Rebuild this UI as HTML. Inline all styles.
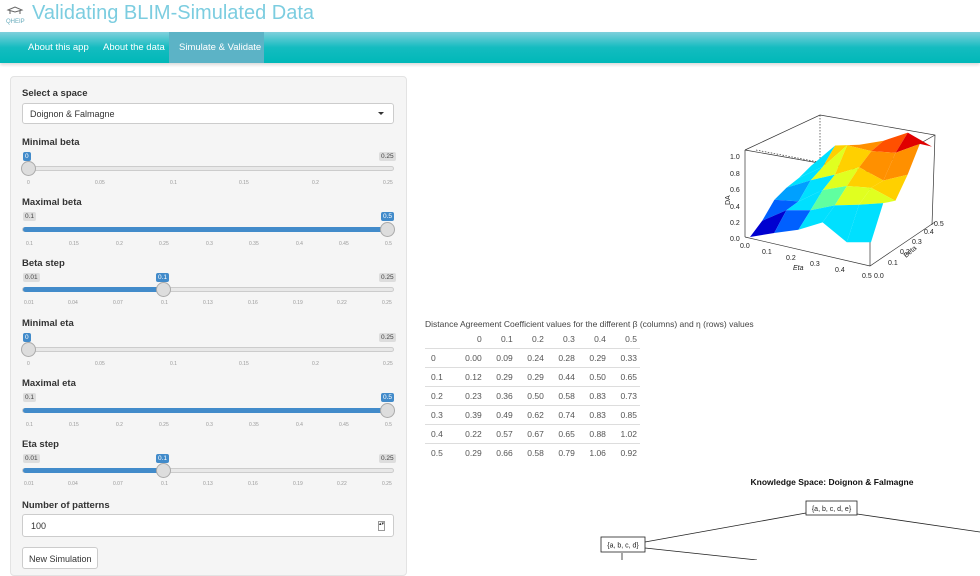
<!DOCTYPE html>
<html><head><meta charset="utf-8"><style>
*{box-sizing:border-box;margin:0;padding:0}
body{width:980px;height:560px;overflow:hidden;background:#fff;font-family:"Liberation Sans",sans-serif;color:#333;position:relative}
.a{position:absolute}
.title{left:32px;top:2px;font-size:20px;color:#7ccde0;white-space:nowrap}
.nav{left:0;top:32px;width:980px;height:31px;background:linear-gradient(#7fd0dc,#14bcc0 50%,#00b8b8);box-shadow:0 2px 3px rgba(0,0,0,.15)}
.nav span{position:absolute;top:10px;font-size:9.5px;color:#fff;white-space:nowrap}
.panel{left:10px;top:76px;width:397px;height:500px;background:#f5f5f5;border:1px solid #e3e3e3;border-radius:4px}
.lbl{font-size:9.5px;font-weight:bold;color:#333;left:22px;white-space:nowrap}
.sel{left:22px;top:103px;width:372px;height:21px;background:#fff;border:1px solid #ccc;border-radius:3px;font-size:9px;padding:5px 7px}
.bub{font-size:6.5px;padding:1px 2px;border-radius:2px;background:#ddd;color:#444;line-height:7px}
.bub.b{background:#428bca;color:#fff}
.trk{left:22px;width:372px;height:5px;background:#e8e8e8;border:1px solid #ccc;border-radius:3px}
.fill{height:5px;margin-top:-1px;background:#428bca;border-radius:3px}
.hdl{width:15px;height:15px;border-radius:50%;background:#ddd;border:1px solid #aaa}
.tl{font-size:5px;color:#999;white-space:nowrap}
.inp{left:22px;top:514px;width:372px;height:23px;background:#fff;border:1px solid #ccc;border-radius:3px;font-size:9px;padding:6px 8px}
.btn{left:22px;top:547px;width:76px;height:22px;background:#fff;border:1px solid #ccc;border-radius:3px;font-size:9px;padding:6px 6px;white-space:nowrap}
table{border-collapse:collapse;font-size:8.5px;color:#555}
td{height:19px;text-align:right;padding:0 3px;border-top:1px solid #ddd}
tr.h td{border-top:none;height:18px}
td.r{text-align:left;padding-left:6px}
</style></head><body>
<svg class="a" style="left:4px;top:4px" width="22" height="22" viewBox="0 0 22 22"><path d="M4 6 L11 3 L18 6 L11 8Z M6 7 V10 M16 7 V10" stroke="#666" fill="none" stroke-width="1"/><text x="2" y="19" font-size="6" fill="#6ab" font-family="Liberation Sans">QHEIP</text></svg>
<div class="a title">Validating BLIM-Simulated Data</div>
<div class="a nav"><span style="left:28px">About this app</span><span style="left:103px">About the data</span><div class="a" style="left:169px;top:0;width:95px;height:31px;background:#5cb3c6"></div><span style="left:179px">Simulate &amp; Validate</span></div>
<div class="a panel"></div>
<div class="a lbl" style="top:88px">Select a space</div>
<div class="a sel">Doignon &amp; Falmagne<span style="position:absolute;right:9px;top:8px;border:3px solid transparent;border-top:3px solid #333"></span></div>

<div class="a lbl" style="top:137px">Minimal beta</div>
<div class="a bub b" style="left:23px;top:152px">0</div><div class="a bub" style="left:379px;top:152px">0.25</div>
<div class="a trk" style="top:166px"></div>
<div class="a hdl" style="left:21px;top:161px"></div>
<div class="a tl" style="left:27px;top:180px;width:370px"><span class="a" style="left:0">0</span><span class="a" style="left:68px">0.05</span><span class="a" style="left:143px">0.1</span><span class="a" style="left:212px">0.15</span><span class="a" style="left:285px">0.2</span><span class="a" style="left:356px">0.25</span></div>

<div class="a lbl" style="top:197px">Maximal beta</div>
<div class="a bub" style="left:23px;top:212px">0.1</div><div class="a bub b" style="left:381px;top:212px">0.5</div>
<div class="a trk" style="top:227px"><div class="fill" style="width:100%"></div></div>
<div class="a hdl" style="left:380px;top:222px"></div>
<div class="a tl" style="left:26px;top:241px;width:370px"><span class="a" style="left:0">0.1</span><span class="a" style="left:43px">0.15</span><span class="a" style="left:90px">0.2</span><span class="a" style="left:133px">0.25</span><span class="a" style="left:180px">0.3</span><span class="a" style="left:223px">0.35</span><span class="a" style="left:270px">0.4</span><span class="a" style="left:313px">0.45</span><span class="a" style="left:359px">0.5</span></div>

<div class="a lbl" style="top:258px">Beta step</div>
<div class="a bub" style="left:23px;top:273px">0.01</div><div class="a bub b" style="left:156px;top:273px">0.1</div><div class="a bub" style="left:379px;top:273px">0.25</div>
<div class="a trk" style="top:287px"><div class="fill" style="width:38%"></div></div>
<div class="a hdl" style="left:156px;top:282px"></div>
<div class="a tl" style="left:24px;top:300px;width:370px"><span class="a" style="left:0">0.01</span><span class="a" style="left:44px">0.04</span><span class="a" style="left:89px">0.07</span><span class="a" style="left:137px">0.1</span><span class="a" style="left:179px">0.13</span><span class="a" style="left:224px">0.16</span><span class="a" style="left:269px">0.19</span><span class="a" style="left:313px">0.22</span><span class="a" style="left:358px">0.25</span></div>

<div class="a lbl" style="top:318px">Minimal eta</div>
<div class="a bub b" style="left:23px;top:333px">0</div><div class="a bub" style="left:379px;top:333px">0.25</div>
<div class="a trk" style="top:347px"></div>
<div class="a hdl" style="left:21px;top:342px"></div>
<div class="a tl" style="left:27px;top:361px;width:370px"><span class="a" style="left:0">0</span><span class="a" style="left:68px">0.05</span><span class="a" style="left:143px">0.1</span><span class="a" style="left:212px">0.15</span><span class="a" style="left:285px">0.2</span><span class="a" style="left:356px">0.25</span></div>

<div class="a lbl" style="top:378px">Maximal eta</div>
<div class="a bub" style="left:23px;top:393px">0.1</div><div class="a bub b" style="left:381px;top:393px">0.5</div>
<div class="a trk" style="top:408px"><div class="fill" style="width:100%"></div></div>
<div class="a hdl" style="left:380px;top:403px"></div>
<div class="a tl" style="left:26px;top:422px;width:370px"><span class="a" style="left:0">0.1</span><span class="a" style="left:43px">0.15</span><span class="a" style="left:90px">0.2</span><span class="a" style="left:133px">0.25</span><span class="a" style="left:180px">0.3</span><span class="a" style="left:223px">0.35</span><span class="a" style="left:270px">0.4</span><span class="a" style="left:313px">0.45</span><span class="a" style="left:359px">0.5</span></div>

<div class="a lbl" style="top:439px">Eta step</div>
<div class="a bub" style="left:23px;top:454px">0.01</div><div class="a bub b" style="left:156px;top:454px">0.1</div><div class="a bub" style="left:379px;top:454px">0.25</div>
<div class="a trk" style="top:468px"><div class="fill" style="width:38%"></div></div>
<div class="a hdl" style="left:156px;top:463px"></div>
<div class="a tl" style="left:24px;top:481px;width:370px"><span class="a" style="left:0">0.01</span><span class="a" style="left:44px">0.04</span><span class="a" style="left:89px">0.07</span><span class="a" style="left:137px">0.1</span><span class="a" style="left:179px">0.13</span><span class="a" style="left:224px">0.16</span><span class="a" style="left:269px">0.19</span><span class="a" style="left:313px">0.22</span><span class="a" style="left:358px">0.25</span></div>

<div class="a lbl" style="top:500px">Number of patterns</div>
<div class="a inp">100<span style="position:absolute;right:8px;top:6px;width:7px;height:10px;border:1px solid #999;font-size:5px;line-height:4px;text-align:center">▴▾</span></div>
<div class="a btn">New Simulation</div>

<svg class="a" style="left:690px;top:100px" width="290" height="190" viewBox="690 100 290 190" font-family="Liberation Sans" font-size="7">
<g stroke="#333" stroke-width="0.7" fill="none">
<path d="M745 150 L820 115 L935 135 L932 225 M745 150 L745 237 M745 150 L870 172 L935 135 M870 172 L870 266"/>
<path d="M745 237 L870 266 L935 222" />
<path d="M820 115 L820 200" stroke-dasharray="1.5 1.5"/>
<path d="M756 150 L870 172" stroke-dasharray="1.5 1.5"/>
</g>
<g stroke="none">
<polygon points="811,165.9 835.2,145.5 823,166.6 798.8,178" fill="#00e0ff"/>
<polygon points="798.8,178 823,166.6 810.8,180.3 786.6,187.6" fill="#00e0ff"/>
<polygon points="786.6,187.6 810.8,180.3 798.6,201.4 774.4,199.7" fill="#00a0ff"/>
<polygon points="774.4,199.7 798.6,201.4 786.4,210.2 762.2,220.8" fill="#0060ff"/>
<polygon points="762.2,220.8 786.4,210.2 774.2,233 750,237" fill="#0000d0"/>
<polygon points="835.2,145.5 859.4,144.7 847.2,145.3 823,166.6" fill="#ffd000"/>
<polygon points="823,166.6 847.2,145.3 835,174.6 810.8,180.3" fill="#e0ff20"/>
<polygon points="810.8,180.3 835,174.6 822.8,190 798.6,201.4" fill="#00e0ff"/>
<polygon points="798.6,201.4 822.8,190 810.6,210.3 786.4,210.2" fill="#00e0ff"/>
<polygon points="786.4,210.2 810.6,210.3 798.4,229.7 774.2,233" fill="#0060ff"/>
<polygon points="859.4,144.7 883.6,140.7 871.4,151.1 847.2,145.3" fill="#ff9000"/>
<polygon points="847.2,145.3 871.4,151.1 859.2,167.3 835,174.6" fill="#ffd000"/>
<polygon points="835,174.6 859.2,167.3 847,186 822.8,190" fill="#e0ff20"/>
<polygon points="822.8,190 847,186 834.8,205.4 810.6,210.3" fill="#60ffa0"/>
<polygon points="810.6,210.3 834.8,205.4 822.6,222.4 798.4,229.7" fill="#00e0ff"/>
<polygon points="883.6,140.7 907.8,132.6 895.6,152.8 871.4,151.1" fill="#ff5000"/>
<polygon points="871.4,151.1 895.6,152.8 883.4,180.5 859.2,167.3" fill="#ff9000"/>
<polygon points="859.2,167.3 883.4,180.5 871.2,187.7 847,186" fill="#ffd000"/>
<polygon points="847,186 871.2,187.7 859,204.7 834.8,205.4" fill="#e0ff20"/>
<polygon points="834.8,205.4 859,204.7 846.8,242.2 822.6,222.4" fill="#00e0ff"/>
<polygon points="907.8,132.6 932,146.6 919.8,143.9 895.6,152.8" fill="#e00000"/>
<polygon points="895.6,152.8 919.8,143.9 907.6,174.8 883.4,180.5" fill="#ff9000"/>
<polygon points="883.4,180.5 907.6,174.8 895.4,200.8 871.2,187.7" fill="#ffd000"/>
<polygon points="871.2,187.7 895.4,200.8 883.2,203.1 859,204.7" fill="#e0ff20"/>
<polygon points="859,204.7 883.2,203.1 871,242.2 846.8,242.2" fill="#00e0ff"/>
</g>
<g fill="#222"><text x="730" y="159">1.0</text><text x="730" y="176">0.8</text><text x="730" y="192">0.6</text><text x="730" y="209">0.4</text><text x="730" y="225">0.2</text><text x="730" y="241">0.0</text>
<text x="740" y="248">0.0</text><text x="762" y="254">0.1</text><text x="786" y="260">0.2</text><text x="810" y="266">0.3</text><text x="835" y="272">0.4</text><text x="862" y="278">0.5</text>
<text x="874" y="278">0.0</text><text x="888" y="265">0.1</text><text x="900" y="254">0.2</text><text x="912" y="244">0.3</text><text x="924" y="234">0.4</text><text x="934" y="226">0.5</text>
<text x="793" y="270" font-style="italic">Eta</text><text x="906" y="258" transform="rotate(-40 906 258)">Beta</text><text x="730" y="205" transform="rotate(-90 730 205)">DA</text></g>
</svg>

<div class="a" style="left:425px;top:319px;font-size:8.5px;color:#444;white-space:nowrap">Distance Agreement Coefficient values for the different β (columns) and η (rows) values</div>
<table class="a" style="left:425px;top:330px;width:215px">
<tr class="h"><td></td><td>0</td><td>0.1</td><td>0.2</td><td>0.3</td><td>0.4</td><td>0.5</td></tr>
<tr><td class="r">0</td><td>0.00</td><td>0.09</td><td>0.24</td><td>0.28</td><td>0.29</td><td>0.33</td></tr>
<tr><td class="r">0.1</td><td>0.12</td><td>0.29</td><td>0.29</td><td>0.44</td><td>0.50</td><td>0.65</td></tr>
<tr><td class="r">0.2</td><td>0.23</td><td>0.36</td><td>0.50</td><td>0.58</td><td>0.83</td><td>0.73</td></tr>
<tr><td class="r">0.3</td><td>0.39</td><td>0.49</td><td>0.62</td><td>0.74</td><td>0.83</td><td>0.85</td></tr>
<tr><td class="r">0.4</td><td>0.22</td><td>0.57</td><td>0.67</td><td>0.65</td><td>0.88</td><td>1.02</td></tr>
<tr><td class="r">0.5</td><td>0.29</td><td>0.66</td><td>0.58</td><td>0.79</td><td>1.06</td><td>0.92</td></tr>
</table>

<svg class="a" style="left:580px;top:470px" width="400" height="90" viewBox="580 470 400 90" font-family="Liberation Sans">
<text x="832" y="485" font-size="8.5" font-weight="bold" text-anchor="middle" fill="#111">Knowledge Space: Doignon &amp; Falmagne</text>
<g stroke="#222" stroke-width="0.8" fill="none">
<path d="M806 513 L645 542 M857 514 L980 532 M645 548 L757 560 M622 553 L622 560"/>
<rect x="806" y="501" width="51" height="14" fill="#fff"/>
<rect x="601" y="537" width="44" height="15" fill="#fff"/>
</g>
<text x="831.5" y="511" font-size="7" text-anchor="middle" fill="#222">{a, b, c, d, e}</text>
<text x="623" y="547.5" font-size="7" text-anchor="middle" fill="#222">{a, b, c, d}</text>
</svg>
</body></html>
